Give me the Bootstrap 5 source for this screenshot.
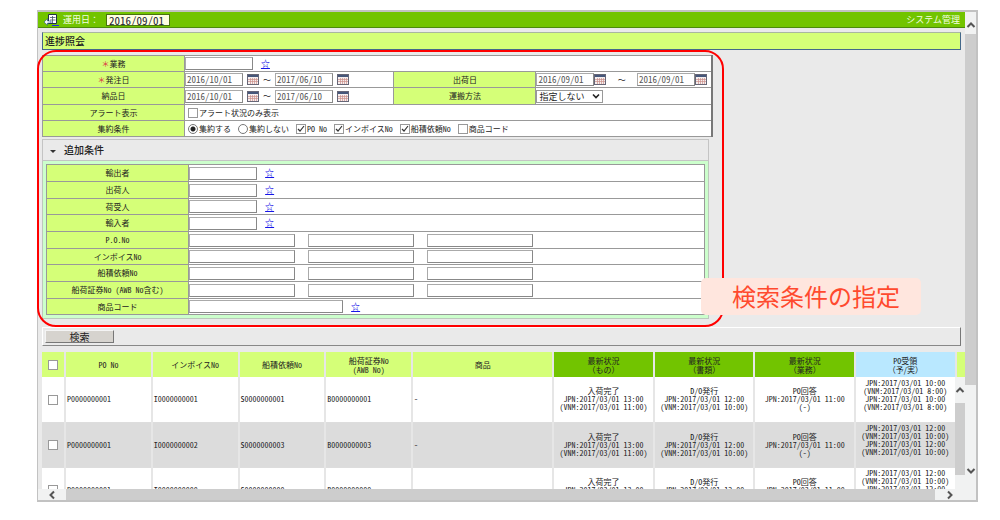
<!DOCTYPE html>
<html lang="ja">
<head>
<meta charset="utf-8">
<meta name="viewport" content="width=device-width, initial-scale=1">
<title>進捗照会</title>
<link href="https://cdn.jsdelivr.net/npm/bootstrap@5.3.0/dist/css/bootstrap.min.css" rel="stylesheet">
<style>
  :root { --lime:#d5ff78; --green:#72c400; --panel:#eaeaea; --thumb:#cdcdcd; --track:#f1f2f2; }
  body { font-family:"Noto Sans CJK JP",sans-serif; font-size:8px; line-height:8px; color:#222; background:#fff; }
  .hw { font-family:"Noto Sans Mono CJK JP","Liberation Mono",monospace; font-size:8px; }
  .window-frame { margin:10px 22px 0 37px; border:2px solid #c2c2c2; border-left-width:1px; background:var(--panel);
    display:grid; grid-template-columns:minmax(0,1fr) 11px; }
  .topbar { height:16px; background:var(--green); border-bottom:1px solid #4b8a0c; color:#f4ffe0; font-size:9px; line-height:15px; padding:0 5px 0 6px; }
  .topbar-date { width:64px; height:12px; margin-left:7px; padding:0 2px; border:1px solid #49720f; background:#ffffe1; color:#223;
    font:11px/10px "Noto Sans Mono CJK JP","Liberation Mono",monospace; }
  .page-title { margin:4px 4px 0; height:18px; border:1px solid #44688a; border-top-color:#a9b7a0; background:var(--lime); font-size:10px; line-height:15px; font-weight:500; padding-left:2px; }
  .criteria { width:74%; padding:5px 11px 8px 4px; }
  .criteria-outline { inset:0 0 0 -1px; border:2px solid #f00; border-radius:19px; pointer-events:none; }
  .callout-note { right:-197px; bottom:12px; width:220px; height:37px; padding-left:10px; border-radius:5px; background:#ffe6de; color:#ff4a2e; font-size:24px; line-height:35px; text-align:center; }
  .form-grid { width:100%; table-layout:fixed; border-collapse:collapse; background:#fff; }
  .form-grid th, .form-grid td { border:1px solid #999; padding:0; }
  .form-grid tr { height:17px; }
  .form-grid th { background:var(--lime); text-align:center; font-weight:400; line-height:10px; }
  .basic-grid { border-right:2px solid #777; }
  .basic-grid tr:nth-child(n+4) { height:16px; }
  .basic-grid tr:nth-child(-n+2) { height:16px; }
  .extra-grid tr:nth-child(3n) { height:16px; }
  .field { display:block; height:13px; width:68px; border:1px solid #aaa; border-right-color:#888; border-bottom-color:#888; background:#fff; padding:0 1px; color:#555; font:9px/11px "Noto Sans Mono CJK JP","Liberation Mono",monospace; border-radius:0; }
  .field-date { width:58px; }
  .field-mid { width:106px; margin-right:13px; }
  .field-long { width:154px; }
  .field-select { width:67px; height:13px; border:1px solid #999; padding:0 0 0 2px; font-size:9px; line-height:11px; color:#222;
    appearance:none; background:#fff url("data:image/svg+xml,%3Csvg xmlns='http://www.w3.org/2000/svg' viewBox='0 0 8 6'%3E%3Cpath d='M1 1.5l3 3 3-3' fill='none' stroke='%23222' stroke-width='1.6'/%3E%3C/svg%3E") no-repeat right 2px center/8px 6px; }
  .star { color:#1616e8; font-size:9px; line-height:10px; margin-left:8px; text-decoration:underline; font-weight:700; }
  .cal { width:12px; height:11px; display:block; }
  .tick, .dot { appearance:none; flex:none; width:10px; height:10px; margin:0; border:1px solid #999; background:#fff; display:block; }
  .dot { border-radius:50%; border-color:#777; }
  .tick:checked { background:#fff url("data:image/svg+xml,%3Csvg xmlns='http://www.w3.org/2000/svg' viewBox='0 0 8 8'%3E%3Cpath d='M1 4l2 2 4-5' fill='none' stroke='%23333' stroke-width='1.2'/%3E%3C/svg%3E") center/8px 8px; }
  .dot:checked { background:radial-gradient(circle,#222 2px,#fff 3px); }
  .opt { display:flex; align-items:center; gap:1px; white-space:nowrap; line-height:10px; }
  .opts { gap:7px; padding-left:3px; }
  .extra-head { display:block; width:calc(100% - 4px); height:22px; margin-top:2px; border:1px solid #c4c4c4; background:var(--panel); padding:0 0 0 7px; text-align:left; font-size:10px; line-height:18px; font-weight:500; color:#222; }
  .caret { display:inline-block; border:3px solid transparent; border-top-color:#333; border-bottom:0; vertical-align:middle; margin-right:8px; }
  .extra-body { width:calc(100% - 4px); border:1px solid #bcc8bc; border-top:0; background:#cfc; padding:3px; }
  .actions { margin:0 4px; height:19px; border:1px solid #fff; border-right-color:#777; border-bottom-color:#888; padding:2px; }
  .search-btn { display:block; width:69px; height:13px; padding:0; border:1px solid #f4f4f4; border-right-color:#777; border-bottom-color:#777; background:#d6d3ce; font-size:10px; line-height:10px; color:#222; }
  .results { margin:6px 0 0 4px; height:137px; overflow:hidden; }
  .results-grid { width:100%; table-layout:fixed; border-collapse:collapse; background:#fff; }
  .results-grid th, .results-grid td { border-right:2px solid #e6e6e6; border-bottom:1px solid #ddd; padding:0 1px; }
  .results-grid th { height:25px; background:var(--lime); text-align:center; font-weight:400; border-bottom:0; white-space:nowrap; line-height:9px; }
  .results-grid th.col-state { background:var(--green); }
  .results-grid th.col-receipt { background:#b9e8ff; }
  .results-grid tbody tr { height:45px; }
  .results-grid tbody tr:nth-child(2) { background:#dcdcdc; }
  .results-grid td { white-space:nowrap; }
  .results-grid .stamp { text-align:center; padding:0; }
  .results-grid .receipt { padding-bottom:9px; }
  .results-grid .tick { margin:1px auto 0; }
  .col-strip { padding:0 !important; border:0 !important; }
  .vbar { background:var(--track); display:flex; flex-direction:column; align-items:center; }
  .vbar svg, .hbar svg { flex:none; }
  .inner-bar { top:25px; right:0; bottom:0; width:10px; }
  .hbar { height:11px; background:var(--track); display:flex; align-items:center; }
  .thumb { background:var(--thumb); }
</style>
</head>
<body>
<svg class="d-none" aria-hidden="true">
  <symbol id="cal" viewBox="0 0 12 11"><rect x=".5" y=".5" width="11" height="10" fill="#f5eeee" stroke="#667"/><path d="M1 2h10" stroke="#46577a" stroke-width="2"/><path d="M1 5.5h10M1 7.5h10M3.5 4v6M5.5 4v6M7.5 4v6M9.5 4v6" stroke="#cb8f8a" stroke-width=".7"/></symbol>
  <symbol id="up" viewBox="0 0 10 10"><path d="M1.500 7L5 3.500 8.500 7" fill="none" stroke="#555" stroke-width="2"/></symbol>
  <symbol id="down" viewBox="0 0 10 10"><path d="M1.500 3L5 6.500 8.500 3" fill="none" stroke="#555" stroke-width="2"/></symbol>
  <symbol id="left" viewBox="0 0 10 10"><path d="M7 1.500L3.500 5 7 8.500" fill="none" stroke="#555" stroke-width="2"/></symbol>
  <symbol id="right" viewBox="0 0 10 10"><path d="M3 1.500L6.500 5 3 8.500" fill="none" stroke="#555" stroke-width="2"/></symbol>
</svg>

<div class="window-frame">
  <main>
    <header class="topbar d-flex align-items-center">
      <a href="#" aria-label="戻る" class="d-flex"><svg width="15" height="12" viewBox="0 0 15 12"><path d="M4.500 .5h8v9h-8z" fill="#fff" stroke="#234"/><path d="M6 3.500h5.500M6 6h5.500M8.500 2v7" stroke="#456" stroke-width=".8"/><path d="M0 8l3.500-3.200V7H7v2H3.500v2.200z" fill="#fff" stroke="#1c4b8c" stroke-width=".6"/><path d="M8 11.500h7" stroke="#22e"/></svg></a>
      <label for="opdate" class="ms-1">運用日：</label>
      <input id="opdate" class="topbar-date" value="2016/09/01">
      <span class="ms-auto">システム管理</span>
    </header>
    <h1 class="page-title mb-0">進捗照会</h1>

    <form class="criteria position-relative">
      <table class="form-grid basic-grid">
        <colgroup><col style="width:21.200%"><col style="width:31.300%"><col style="width:21.200%"><col style="width:26.300%"></colgroup>
        <tr><th><span class="text-danger">＊</span><label for="biz">業務</label></th><td colspan="3"><div class="d-flex align-items-center"><input id="biz" class="field"><a href="#" class="star">☆</a></div></td></tr>
        <tr><th><span class="text-danger">＊</span><label for="od1">発注日</label></th>
          <td><div class="d-flex align-items-center"><input id="od1" class="field field-date" value="2016/10/01"><svg class="cal ms-1"><use href="#cal"/></svg><span class="mx-1">～</span><input aria-label="発注日 終了" class="field field-date" value="2017/06/10"><svg class="cal ms-1"><use href="#cal"/></svg></div></td>
          <th><label for="sd1">出荷日</label></th>
          <td><div class="d-flex align-items-center"><input id="sd1" class="field field-date" value="2016/09/01"><svg class="cal"><use href="#cal"/></svg><span class="mx-auto">～</span><input aria-label="出荷日 終了" class="field field-date" value="2016/09/01"><svg class="cal me-1"><use href="#cal"/></svg></div></td></tr>
        <tr><th><label for="dd1">納品日</label></th>
          <td><div class="d-flex align-items-center"><input id="dd1" class="field field-date" value="2016/10/01"><svg class="cal ms-1"><use href="#cal"/></svg><span class="mx-1">～</span><input aria-label="納品日 終了" class="field field-date" value="2017/06/10"><svg class="cal ms-1"><use href="#cal"/></svg></div></td>
          <th><label for="ship">運搬方法</label></th>
          <td><select id="ship" class="field-select d-block"><option>指定しない</option></select></td></tr>
        <tr><th>アラート表示</th><td colspan="3"><div class="d-flex opts"><label class="opt"><input type="checkbox" class="tick">アラート状況のみ表示</label></div></td></tr>
        <tr><th>集約条件</th><td colspan="3"><div class="d-flex opts">
          <label class="opt"><input type="radio" name="agg" class="dot" checked>集約する</label>
          <label class="opt"><input type="radio" name="agg" class="dot">集約しない</label>
          <label class="opt"><input type="checkbox" class="tick" checked><span class="hw">PO No</span></label>
          <label class="opt"><input type="checkbox" class="tick" checked><span>インボイス<span class="hw">No</span></span></label>
          <label class="opt"><input type="checkbox" class="tick" checked><span>船積依頼<span class="hw">No</span></span></label>
          <label class="opt"><input type="checkbox" class="tick">商品コード</label></div></td></tr>
      </table>

      <button type="button" class="extra-head"><span class="caret"></span>追加条件</button>
      <div class="extra-body">
        <table class="form-grid extra-grid">
          <colgroup><col style="width:21.600%"><col></colgroup>
          <tr><th><label for="e1">輸出者</label></th><td><div class="d-flex align-items-center"><input id="e1" class="field"><a href="#" class="star">☆</a></div></td></tr>
          <tr><th><label for="e2">出荷人</label></th><td><div class="d-flex align-items-center"><input id="e2" class="field"><a href="#" class="star">☆</a></div></td></tr>
          <tr><th><label for="e3">荷受人</label></th><td><div class="d-flex align-items-center"><input id="e3" class="field"><a href="#" class="star">☆</a></div></td></tr>
          <tr><th><label for="e4">輸入者</label></th><td><div class="d-flex align-items-center"><input id="e4" class="field"><a href="#" class="star">☆</a></div></td></tr>
          <tr><th><label for="e5" class="hw">P.O.No</label></th><td><div class="d-flex"><input id="e5" class="field field-mid"><input aria-label="P.O.No 2" class="field field-mid"><input aria-label="P.O.No 3" class="field field-mid"></div></td></tr>
          <tr><th><label for="e6">インボイス<span class="hw">No</span></label></th><td><div class="d-flex"><input id="e6" class="field field-mid"><input aria-label="インボイスNo 2" class="field field-mid"><input aria-label="インボイスNo 3" class="field field-mid"></div></td></tr>
          <tr><th><label for="e7">船積依頼<span class="hw">No</span></label></th><td><div class="d-flex"><input id="e7" class="field field-mid"><input aria-label="船積依頼No 2" class="field field-mid"><input aria-label="船積依頼No 3" class="field field-mid"></div></td></tr>
          <tr><th><label for="e8">船荷証券<span class="hw">No (AWB No</span>含む<span class="hw">)</span></label></th><td><div class="d-flex"><input id="e8" class="field field-mid"><input aria-label="船荷証券No 2" class="field field-mid"><input aria-label="船荷証券No 3" class="field field-mid"></div></td></tr>
          <tr><th><label for="e9">商品コード</label></th><td><div class="d-flex align-items-center"><input id="e9" class="field field-long"><a href="#" class="star">☆</a></div></td></tr>
        </table>
      </div>
      <div class="criteria-outline position-absolute"></div>
      <div class="callout-note position-absolute">検索条件の指定</div>
    </form>

    <div class="actions"><button type="submit" class="search-btn">検索</button></div>

    <div class="results position-relative">
      <table class="results-grid">
        <colgroup><col style="width:2.500%"><col style="width:9.400%"><col style="width:9.400%"><col style="width:9.400%"><col style="width:9.400%"><col style="width:15.300%"><col style="width:10.900%"><col style="width:10.900%"><col style="width:10.900%"><col style="width:10.900%"><col></colgroup>
        <thead><tr>
          <th><input type="checkbox" class="tick" aria-label="すべて選択"></th><th class="hw">PO No</th><th>インボイス<span class="hw">No</span></th><th>船積依頼<span class="hw">No</span></th><th>船荷証券<span class="hw">No<br>(AWB No)</span></th><th>商品</th>
          <th class="col-state">最新状況<br>（もの）</th><th class="col-state">最新状況<br>（書類）</th><th class="col-state">最新状況<br>（業務）</th><th class="col-receipt"><span class="hw">PO</span>受領<br>（予/実）</th><th class="col-strip"></th>
        </tr></thead>
        <tbody>
          <tr><td><input type="checkbox" class="tick" aria-label="行1"></td><td class="hw">P0000000001</td><td class="hw">I0000000001</td><td class="hw">S0000000001</td><td class="hw">B0000000001</td><td class="hw">-</td>
            <td class="stamp">入荷完了<div class="hw">JPN:2017/03/01 13:00<br>(VNM:2017/03/01 11:00)</div></td>
            <td class="stamp"><span class="hw">D/O</span>発行<div class="hw">JPN:2017/03/01 12:00<br>(VNM:2017/03/01 10:00)</div></td>
            <td class="stamp"><span class="hw">PO</span>回答<div class="hw">JPN:2017/03/01 11:00<br>(-)</div></td>
            <td class="stamp receipt hw">JPN:2017/03/01 10:00<br>(VNM:2017/03/01 8:00)<br>JPN:2017/03/01 10:00<br>(VNM:2017/03/01 8:00)</td><td class="col-strip"></td></tr>
          <tr><td><input type="checkbox" class="tick" aria-label="行2"></td><td class="hw">P0000000001</td><td class="hw">I0000000002</td><td class="hw">S0000000003</td><td class="hw">B0000000003</td><td class="hw">-</td>
            <td class="stamp">入荷完了<div class="hw">JPN:2017/03/01 13:00<br>(VNM:2017/03/01 11:00)</div></td>
            <td class="stamp"><span class="hw">D/O</span>発行<div class="hw">JPN:2017/03/01 12:00<br>(VNM:2017/03/01 10:00)</div></td>
            <td class="stamp"><span class="hw">PO</span>回答<div class="hw">JPN:2017/03/01 11:00<br>(-)</div></td>
            <td class="stamp receipt hw">JPN:2017/03/01 12:00<br>(VNM:2017/03/01 10:00)<br>JPN:2017/03/01 12:00<br>(VNM:2017/03/01 10:00)</td><td class="col-strip"></td></tr>
          <tr><td><input type="checkbox" class="tick" aria-label="行3"></td><td class="hw">P0000000001</td><td class="hw">I0000000000</td><td class="hw">S0000000000</td><td class="hw">B0000000000</td><td class="hw"></td>
            <td class="stamp">入荷完了<div class="hw">JPN:2017/03/01 13:00<br>(VNM:2017/03/01 11:00)</div></td>
            <td class="stamp"><span class="hw">D/O</span>発行<div class="hw">JPN:2017/03/01 12:00<br>(VNM:2017/03/01 10:00)</div></td>
            <td class="stamp"><span class="hw">PO</span>回答<div class="hw">JPN:2017/03/01 11:00<br>(-)</div></td>
            <td class="stamp receipt hw">JPN:2017/03/01 12:00<br>(VNM:2017/03/01 10:00)<br>JPN:2017/03/01 12:00<br>(VNM:2017/03/01 10:00)</td><td class="col-strip"></td></tr>
        </tbody>
      </table>
      <div class="inner-bar vbar position-absolute"><svg class="my-2" width="10" height="10"><use href="#up"/></svg><div class="thumb align-self-stretch" style="height:64%"></div></div>
    </div>
    <div class="hbar"><svg class="mx-2" width="12" height="10"><use href="#left"/></svg><div class="thumb flex-fill align-self-stretch"></div><svg class="mx-2" width="14" height="10"><use href="#right"/></svg></div>
  </main>
  <div class="vbar"><svg class="mt-2 mb-1" width="10" height="10"><use href="#up"/></svg><div class="thumb align-self-stretch" style="height:72%"></div><svg class="mt-auto mb-4" width="10" height="10"><use href="#down"/></svg></div>
</div>
<script src="https://cdn.jsdelivr.net/npm/bootstrap@5.3.0/dist/js/bootstrap.bundle.min.js"></script>
</body>
</html>
